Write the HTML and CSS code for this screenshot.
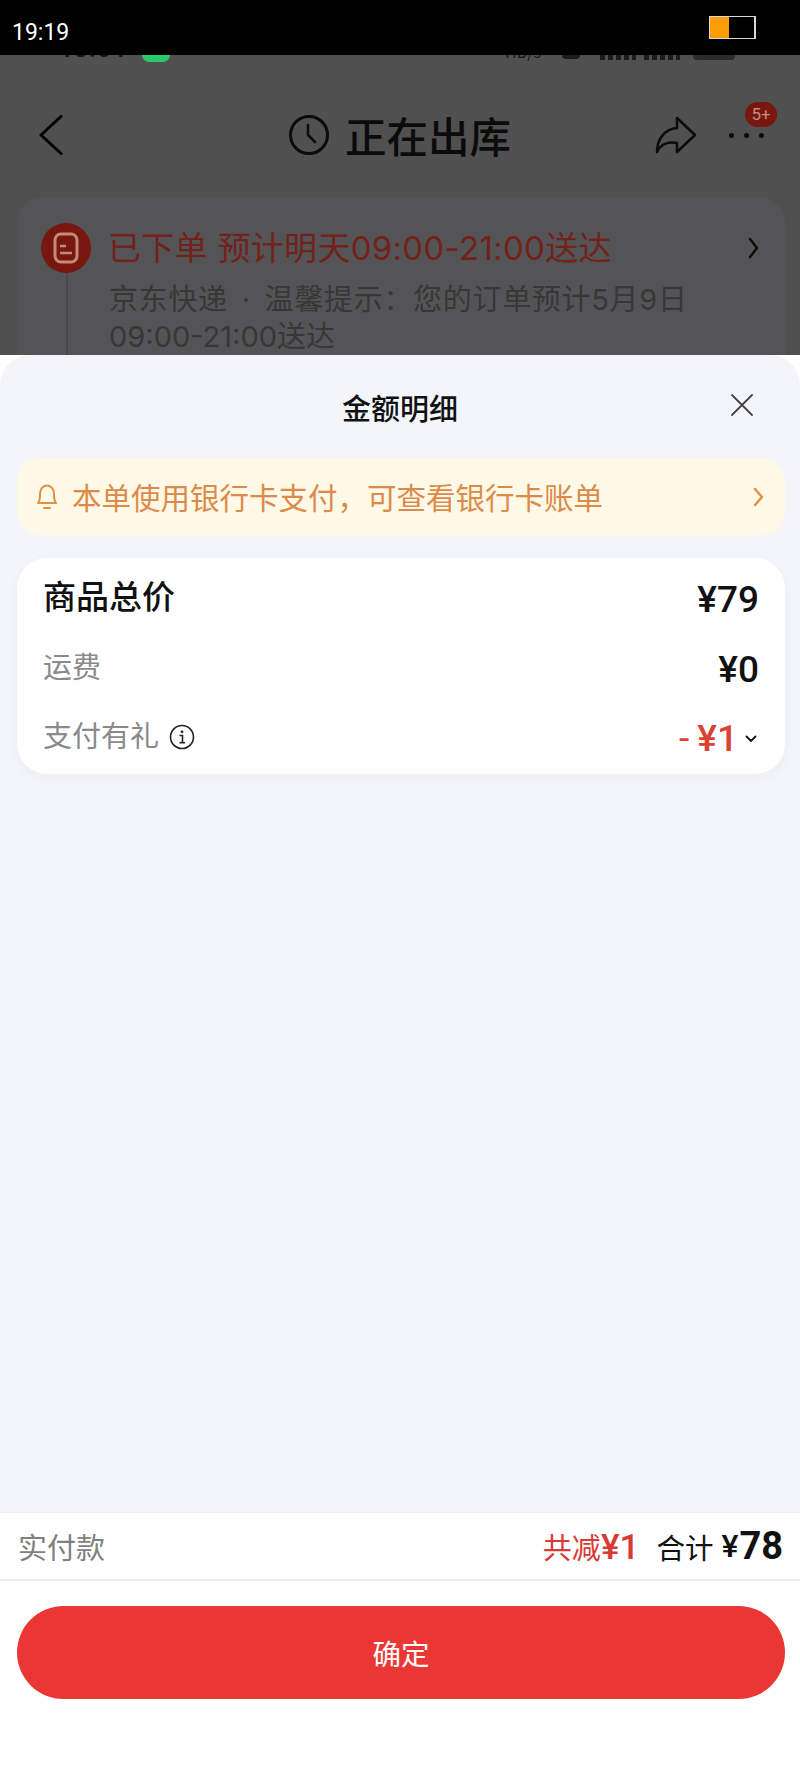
FILE: index.html
```html
<!DOCTYPE html>
<html lang="zh-CN">
<head>
    <meta charset="UTF-8">
    <meta name="viewport" content="width=device-width, initial-scale=1.0">
    <title>金额明细</title>
    <link rel="stylesheet" href="styles.css">
</head>
<body>
    <div class="topbar">
        <span class="topbar-time">19:19</span>
        <div class="battery"><div class="battery-level"></div></div>
    </div>

    <div class="backdrop">
        <div class="peek">
            <span class="peek-time">18:54</span>
            <span class="peek-pill"></span>
            <span class="peek-speed">HD/s</span>
            <span class="peek-wifi"></span>
            <span class="peek-bars"></span>
            <span class="peek-bars"></span>
            <span class="peek-battery"></span>
        </div>

        <div class="nav">
            <svg class="nav-back" width="24" height="40" viewBox="0 0 24 40"><path d="M22 1.500 L2 20 L22 38.500" fill="none" stroke="#000" stroke-width="3" stroke-linecap="round" stroke-linejoin="round"/></svg>
            <div class="nav-title">
                <svg width="42" height="42" viewBox="0 0 42 42"><circle cx="21" cy="21" r="18.500" fill="none" stroke="#0b0b0b" stroke-width="3"/><path d="M20 11 V21 L27 28" fill="none" stroke="#0b0b0b" stroke-width="2.500" stroke-linecap="round" stroke-linejoin="round"/></svg>
                <span>正在出库</span>
            </div>
            <svg class="nav-share" width="42" height="38" viewBox="0 0 42 38"><path d="M22 2 L40 19 L22 36 V27 C12 25 5 29 2 36 C2 24 9 13 22 12 Z" fill="none" stroke="#0b0b0b" stroke-width="2.500" stroke-linejoin="round"/></svg>
            <div class="nav-more">
                <span class="dot"></span><span class="dot"></span><span class="dot"></span>
                <span class="badge">5+</span>
            </div>
        </div>

        <div class="order-card">
            <div class="order-head">
                <div class="order-icon">
                    <svg width="26" height="32" viewBox="0 0 26 32"><rect x="2" y="2" width="22" height="28" rx="6" fill="none" stroke="#c28a78" stroke-width="3"/><path d="M7 14 H13 M7 21 H19" stroke="#c28a78" stroke-width="2.500"/></svg>
                </div>
                <span class="order-status">已下单 预计明天09:00-21:00送达</span>
                <svg class="order-arrow" width="11" height="22" viewBox="0 0 11 22"><path d="M2 2 L9 11 L2 20" fill="none" stroke="#0b0b0b" stroke-width="2.500" stroke-linecap="round" stroke-linejoin="round"/></svg>
            </div>
            <div class="order-body"><span class="order-tip">京东快递 · 温馨提示：您的订单预计5月9日</span><br>09:00-21:00送达</div>
        </div>
    </div>

    <div class="sheet">
        <div class="sheet-head">
            <h1>金额明细</h1>
            <svg class="sheet-close" width="24" height="24" viewBox="0 0 24 24"><path d="M2 2 L22 22 M22 2 L2 22" stroke="#444" stroke-width="1.800" stroke-linecap="round"/></svg>
        </div>

        <div class="notice">
            <svg width="24" height="28" viewBox="0 0 24 28"><path d="M3 20 C5 18 5 16 5 11 C5 6 8 2.500 12 2.500 C16 2.500 19 6 19 11 C19 16 19 18 21 20 Z" fill="none" stroke="#e0903f" stroke-width="2" stroke-linejoin="round"/><path d="M9 25 H15" stroke="#e0903f" stroke-width="2" stroke-linecap="round"/></svg>
            <span class="notice-text">本单使用银行卡支付，可查看银行卡账单</span>
            <svg width="11" height="20" viewBox="0 0 11 20"><path d="M2 2 L9 10 L2 18" fill="none" stroke="#e0903f" stroke-width="2.500" stroke-linecap="round" stroke-linejoin="round"/></svg>
        </div>

        <div class="detail-card">
            <div class="detail-row">
                <span class="detail-name">商品总价</span>
                <span class="amount">¥79</span>
            </div>
            <div class="detail-row">
                <span class="detail-name muted">运费</span>
                <span class="amount">¥0</span>
            </div>
            <div class="detail-row">
                <span class="detail-name muted">支付有礼</span>
                <svg class="info-icon" width="26" height="26" viewBox="0 0 26 26"><circle cx="13" cy="13" r="11.500" fill="none" stroke="#222" stroke-width="1.600"/><circle cx="13" cy="7.800" r="1.400" fill="#222"/><path d="M10.500 11.500 H13.500 V18.500 M10.500 18.800 H16" fill="none" stroke="#222" stroke-width="1.600"/></svg>
                <span class="amount amount-red"><span class="minus">-</span>¥1</span>
                <svg class="row-arrow" width="12" height="8" viewBox="0 0 12 8"><path d="M1.500 1.500 L6 6 L10.500 1.500" fill="none" stroke="#111" stroke-width="1.800" stroke-linecap="round" stroke-linejoin="round"/></svg>
            </div>
        </div>

        <div class="pay-bar">
            <span class="pay-label">实付款</span>
            <span class="pay-save">共减<b>¥1</b></span>
            <span class="pay-sum">合计</span>
            <span class="pay-yen">¥</span>
            <span class="pay-total">78</span>
        </div>

        <div class="action">
            <button type="button" class="confirm-btn">确定</button>
        </div>
    </div>
</body>
</html>
```

FILE: styles.css
```css
* {
    box-sizing: border-box;
}

body {
    margin: 0;
    width: 800px;
    height: 1777px;
    display: flex;
    flex-direction: column;
    overflow: hidden;
    background-color: #ffffff;
    font-family: "Noto Sans CJK SC", "Noto Sans", sans-serif;
}

/* black strip on top */
.topbar {
    height: 55px;
    flex: none;
    display: flex;
    align-items: flex-start;
    justify-content: space-between;
    padding: 16px 44px 0 12px;
    background-color: #000000;
}

.topbar-time {
    color: #ffffff;
    font-family: "Roboto", sans-serif;
    font-size: 23px;
    line-height: 33px;
}

.battery {
    width: 47px;
    height: 23px;
    border: 1px solid #d8d8d8;
    border-right-width: 2px;
}

.battery-level {
    width: 19px;
    height: 100%;
    background-color: #ff9c0a;
}

/* dimmed page behind the sheet */
.backdrop {
    height: 300px;
    flex: none;
    overflow: hidden;
    background-color: #505050;
}

.peek {
    height: 7px;
    display: flex;
    overflow: hidden;
    padding-left: 60px;
    color: #161616;
}

.peek-time {
    width: 82px;
    margin-top: -17px;
    font-family: "Roboto", sans-serif;
    font-size: 22px;
    line-height: 24px;
    font-weight: 700;
    letter-spacing: 2px;
}

.peek-pill {
    width: 28px;
    height: 7px;
    border-radius: 0 0 8px 8px;
    background-color: #2ac76c;
}

.peek-speed {
    width: 57px;
    margin-left: 335px;
    margin-top: -15px;
    font-size: 16px;
    line-height: 22px;
}

.peek-wifi {
    width: 18px;
    height: 4px;
    margin-right: 20px;
    border-radius: 0 0 9px 9px;
    background-color: #1c1c1c;
}

.peek-bars {
    width: 36px;
    height: 5px;
    margin-right: 8px;
    background: repeating-linear-gradient(90deg, #1c1c1c 0 5px, transparent 5px 8px);
}

.peek-battery {
    width: 42px;
    height: 5px;
    margin-left: 5px;
    border-radius: 0 0 4px 4px;
    background-color: #2c2c2c;
}

.nav {
    height: 136px;
    display: flex;
    align-items: center;
    padding: 10px 39px 0;
    position: relative;
}

.nav-back {
    flex: none;
}

.nav-title {
    display: flex;
    align-items: center;
    gap: 15px;
    margin-left: 225px;
    color: #0b0b0b;
    font-size: 41.500px;
    font-weight: 500;
    line-height: 48px;
}

.nav-share {
    flex: none;
    margin-left: auto;
    margin-right: 64px;
}

.nav-more {
    position: absolute;
    top: 0;
    right: 36px;
    width: 35px;
    height: 136px;
    display: flex;
    align-items: center;
    justify-content: space-between;
    padding-top: 10px;
}

.dot {
    width: 5px;
    height: 5px;
    border-radius: 50%;
    background-color: #0b0b0b;
}

.badge {
    position: absolute;
    top: 40px;
    right: -13px;
    width: 32px;
    height: 25px;
    border-radius: 13px;
    background-color: #78170f;
    color: #c98a80;
    font-family: "Roboto", sans-serif;
    font-size: 17px;
    line-height: 25px;
    text-align: center;
}

.order-card {
    height: 200px;
    margin: 0 15px 0 17px;
    padding: 25px 24px 0;
    border-radius: 24px;
    background-color: #545456;
}

.order-head {
    display: flex;
    align-items: center;
}

.order-icon {
    width: 50px;
    height: 50px;
    flex: none;
    display: flex;
    align-items: center;
    justify-content: center;
    border-radius: 50%;
    background-color: #78170f;
}

.order-status {
    margin-left: 17px;
    color: #72211b;
    font-family: "Inter", "Noto Sans CJK SC", sans-serif;
    font-size: 33px;
    line-height: 48px;
    letter-spacing: 0.300px;
    white-space: nowrap;
}

.order-arrow {
    margin-left: auto;
    margin-right: 2px;
}

.order-body {
    margin-left: 25px;
    padding: 8px 0 30px 41px;
    border-left: 2px solid #4a4a4b;
    color: #373737;
    font-family: "Inter", "Noto Sans CJK SC", sans-serif;
    font-size: 29px;
    line-height: 37px;
    white-space: nowrap;
}

.order-tip {
    letter-spacing: 0.700px;
    word-spacing: 5px;
}

/* bottom sheet */
.sheet {
    flex: 1;
    display: flex;
    flex-direction: column;
    border-radius: 30px 30px 0 0;
    background-color: #f3f5fa;
}

.sheet-head {
    height: 103px;
    flex: none;
    display: flex;
    align-items: center;
    justify-content: center;
    position: relative;
}

.sheet-head h1 {
    margin: 0;
    color: #111111;
    font-size: 29px;
    font-weight: 500;
    line-height: 40px;
}

.sheet-close {
    position: absolute;
    top: 38px;
    right: 46px;
}

.notice {
    height: 77px;
    flex: none;
    display: flex;
    align-items: center;
    margin: 0 15px 0 17px;
    padding: 0 21px 0 18px;
    border-radius: 22px;
    background-color: #fef8e6;
}

.notice-text {
    flex: 1;
    margin-left: 13px;
    margin-top: -2px;
    color: #dc8a49;
    font-size: 29.500px;
    line-height: 40px;
    white-space: nowrap;
}

.detail-card {
    height: 216px;
    flex: none;
    display: flex;
    flex-direction: column;
    gap: 13.500px;
    margin: 23px 15px 0 17px;
    padding: 14px 26px 0 26px;
    border-radius: 30px;
    background-color: #ffffff;
    box-shadow: 0 4px 12px rgba(40, 50, 90, 0.04);
}

.detail-row {
    height: 56px;
    flex: none;
    display: flex;
    align-items: center;
}

.detail-name {
    margin-top: -10px;
    color: #111111;
    font-size: 33px;
    font-weight: 500;
    line-height: 44px;
}

.muted {
    color: #8a8a8a;
    font-size: 29px;
    font-weight: 400;
}

.info-icon {
    margin-left: 10px;
    margin-top: -4px;
}

.amount {
    margin-left: auto;
    color: #111111;
    font-family: "Roboto", sans-serif;
    font-size: 37px;
    font-weight: 500;
    line-height: 44px;
}

.amount-red {
    color: #da4233;
}

.minus {
    margin-right: 8px;
    font-weight: 400;
}

.row-arrow {
    flex: none;
    margin-left: 7px;
    margin-right: 2px;
}

.pay-bar {
    height: 69px;
    flex: none;
    display: flex;
    align-items: center;
    margin-top: auto;
    padding: 0 17px 0 18px;
    background-color: #ffffff;
    border-top: 1px solid #eef0f4;
    border-bottom: 2px solid #ededed;
}

.pay-label {
    flex: 1;
    color: #808080;
    font-size: 29px;
}

.pay-save {
    color: #d93a34;
    font-size: 29px;
}

.pay-save b {
    font-family: "Roboto", sans-serif;
    font-weight: 500;
    font-size: 35px;
}

.pay-sum {
    margin-left: 17px;
    color: #111111;
    font-size: 28.500px;
}

.pay-yen {
    margin-left: 8px;
    color: #111111;
    font-family: "Roboto", sans-serif;
    font-size: 32px;
    font-weight: 500;
}

.pay-total {
    margin-left: 1px;
    color: #111111;
    font-family: "Roboto", sans-serif;
    font-size: 38px;
    font-weight: 700;
}

.action {
    height: 196px;
    flex: none;
    padding: 25px 15px 0 17px;
    background-color: #ffffff;
}

.confirm-btn {
    display: block;
    width: 100%;
    height: 93px;
    border: none;
    border-radius: 47px;
    background-color: #eb3734;
    color: #ffffff;
    font-family: inherit;
    font-size: 28.500px;
}
```
